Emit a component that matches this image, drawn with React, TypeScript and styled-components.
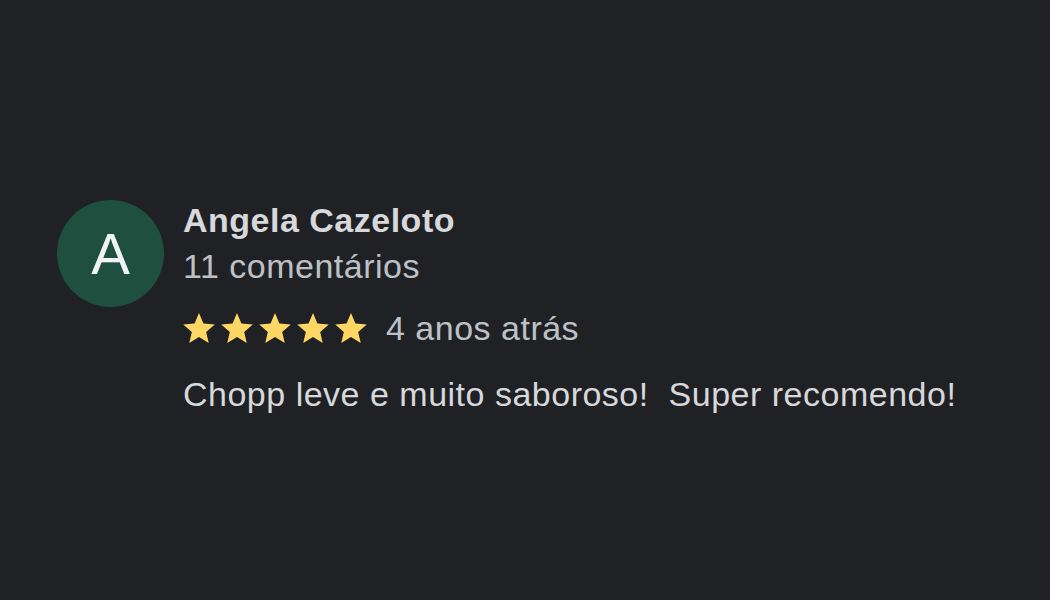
import styled, { createGlobalStyle } from 'styled-components';

const GlobalStyle = createGlobalStyle`
  html, body {
    margin: 0;
    background: #202124;
  }
  body {
    font-family: 'Liberation Sans', Arial, sans-serif;
  }
`;

const Page = styled.div`
  width: 1050px;
  height: 600px;
  box-sizing: border-box;
  padding: 197px 0 0 57px;
  background: #202124;
`;

const Review = styled.div`
  display: flex;
  align-items: flex-start;
  gap: 19px;
`;

const Avatar = styled.div`
  width: 107px;
  height: 107px;
  margin-top: 3px;
  border-radius: 50%;
  background: #1f4f3e;
  color: #f1f3f4;
  display: flex;
  align-items: center;
  justify-content: center;
  font-size: 58px;
  flex-shrink: 0;
`;

const Body = styled.div`
  display: flex;
  flex-direction: column;
`;

const Name = styled.div`
  font-size: 34px;
  letter-spacing: 0.5px;
  font-weight: bold;
  color: #d6d8db;
  line-height: 46px;
`;

const Meta = styled.div`
  font-size: 34px;
  letter-spacing: 0.5px;
  color: #bdc1c6;
  line-height: 46px;
`;

const RatingRow = styled.div`
  display: flex;
  align-items: center;
  margin-top: 16px;
  gap: 19px;
`;

const Stars = styled.div`
  display: flex;
  gap: 6px;
`;

const Text = styled.div`
  margin-top: 20px;
  font-size: 34px;
  letter-spacing: 0.5px;
  color: #d6d8db;
  line-height: 46px;
  white-space: pre;
`;

const Star = () => (
  <svg width="32" height="30" viewBox="2 2 20 19">
    <path
      d="M12 17.27L18.18 21l-1.64-7.03L22 9.24l-7.19-.61L12 2 9.19 8.63 2 9.24l5.46 4.73L5.82 21z"
      fill="#fdd663"
    />
  </svg>
);

export default function App() {
  return (
    <>
      <GlobalStyle />
      <Page>
        <Review>
          <Avatar>A</Avatar>
          <Body>
            <Name>Angela Cazeloto</Name>
            <Meta>11 comentários</Meta>
            <RatingRow>
              <Stars>
                {[0, 1, 2, 3, 4].map((i) => (
                  <Star key={i} />
                ))}
              </Stars>
              <Meta>4 anos atrás</Meta>
            </RatingRow>
            <Text>Chopp leve e muito saboroso!  Super recomendo!</Text>
          </Body>
        </Review>
      </Page>
    </>
  );
}
